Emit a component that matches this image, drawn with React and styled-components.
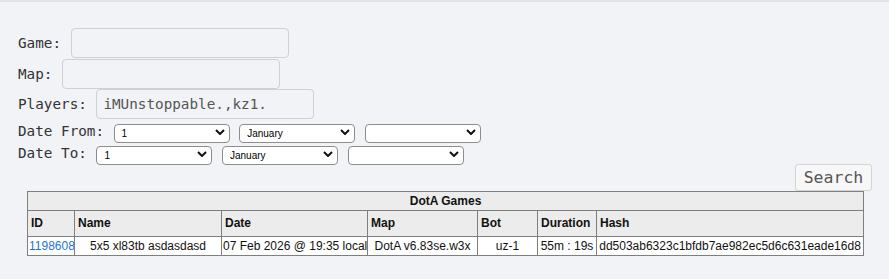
import React from 'react'
import styled, { createGlobalStyle } from 'styled-components'

const GlobalStyle = createGlobalStyle`
  html, body {
    margin: 0;
    padding: 0;
    background: #f2f3f7;
  }
  body {
    border-top: 2px solid #e2e3e7;
    font-family: "DejaVu Sans Mono", monospace;
  }
`

const Page = styled.div`
  padding: 26px 0 24px 0;
`

const Form = styled.form`
  padding-left: 18px;
  display: flex;
  flex-direction: column;
  gap: 0.5px;
`

const FieldRow = styled.div`
  display: flex;
  align-items: center;
  gap: 9.5px;
  height: ${(p) => p.$h || 30}px;
  margin-top: ${(p) => p.$mt || 0}px;
`

const Label = styled.label`
  font-family: "DejaVu Sans Mono", monospace;
  font-size: 14.3px;
  color: #333;
  white-space: pre;
`

const TextInput = styled.input`
  box-sizing: border-box;
  width: 218px;
  height: 30px;
  margin: 0;
  padding: 0 6px;
  background: transparent;
  border: 1px solid #cfd0d3;
  border-radius: 4px;
  font-family: "DejaVu Sans Mono", monospace;
  font-size: 14.3px;
  color: #555;
  outline: none;
`

const Selects = styled.div`
  display: flex;
  gap: 9.6px;
`

const SelectWrap = styled.div`
  position: relative;
  width: 116px;
  height: 19px;
  svg {
    position: absolute;
    right: 5px;
    top: 7px;
    pointer-events: none;
  }
`

const Select = styled.select`
  appearance: none;
  box-sizing: border-box;
  width: 100%;
  height: 100%;
  margin: 0;
  padding: 0 0 0 7px;
  background: #fff;
  border: 1px solid #8d8d8d;
  border-radius: 4px;
  font-family: "Liberation Sans", Arial, sans-serif;
  font-size: 10px;
  color: #000;
`

const SearchRow = styled.div`
  display: flex;
  justify-content: flex-end;
  padding-right: 17px;
`

const SearchButton = styled.button`
  box-sizing: border-box;
  width: 77px;
  height: 27px;
  padding: 0;
  background: #f7f7f8;
  border: 1px solid #d3d4d7;
  border-radius: 3px;
  font-family: "DejaVu Sans Mono", monospace;
  font-size: 16.5px;
  color: #555;
  cursor: pointer;
`

const Table = styled.table`
  margin-left: 27px;
  width: 837px;
  table-layout: fixed;
  border-collapse: collapse;
  border: 1px solid #7f7f7f;
  font-family: "Liberation Sans", Arial, sans-serif;
  font-size: 12px;
  color: #111;
`

const TitleCell = styled.th`
  background: #ececec;
  border: 1px solid #7f7f7f;
  padding: 2px 3px;
  line-height: 14px;
  font-weight: bold;
  text-align: center;
`

const HeadCell = styled.th`
  background: #ececec;
  border: 1px solid #7f7f7f;
  padding: 5px 3px 6px;
  line-height: 14px;
  font-weight: bold;
  text-align: left;
  white-space: nowrap;
`

const Cell = styled.td`
  background: #fff;
  border: 1px solid #7f7f7f;
  padding: 2px 1px;
  line-height: 14px;
  text-align: center;
  white-space: nowrap;
  overflow: hidden;
`

const IdLink = styled.a`
  color: #1b76d3;
  text-decoration: none;
`

const Chevron = () => (
  <svg width="10" height="6" viewBox="0 0 10 6">
    <polyline points="1,1 5,5 9,1" fill="none" stroke="#111" strokeWidth="2" />
  </svg>
)

const DateSelect = ({ value, options }) => (
  <SelectWrap>
    <Select defaultValue={value}>
      {options.map((o) => (
        <option key={o} value={o}>{o}</option>
      ))}
    </Select>
    <Chevron />
  </SelectWrap>
)

const days = Array.from({ length: 31 }, (_, i) => String(i + 1))
const months = ['January', 'February', 'March', 'April', 'May', 'June', 'July',
  'August', 'September', 'October', 'November', 'December']
const years = ['']

const DateRow = ({ label, mt }) => (
  <FieldRow $h={21.5} $mt={mt}>
    <Label>{label}</Label>
    <Selects>
      <DateSelect value="1" options={days} />
      <DateSelect value="January" options={months} />
      <DateSelect value="" options={years} />
    </Selects>
  </FieldRow>
)

const columns = [
  { name: 'ID', width: 47 },
  { name: 'Name', width: 147 },
  { name: 'Date', width: 146 },
  { name: 'Map', width: 110 },
  { name: 'Bot', width: 60 },
  { name: 'Duration', width: 59 },
  { name: 'Hash', width: 267 },
]

const games = [
  {
    id: '1198608',
    name: '5x5 xl83tb asdasdasd',
    date: '07 Feb 2026 @ 19:35 local',
    map: 'DotA v6.83se.w3x',
    bot: 'uz-1',
    duration: '55m : 19s',
    hash: 'dd503ab6323c1bfdb7ae982ec5d6c631eade16d8',
  },
]

const App = () => {
  return (
    <Page>
      <GlobalStyle />
      <Form onSubmit={(e) => e.preventDefault()}>
        <FieldRow>
          <Label>Game:</Label>
          <TextInput type="text" name="game" />
        </FieldRow>
        <FieldRow>
          <Label>Map:</Label>
          <TextInput type="text" name="map" />
        </FieldRow>
        <FieldRow>
          <Label>Players:</Label>
          <TextInput type="text" name="players" defaultValue="iMUnstoppable.,kz1." />
        </FieldRow>
        <DateRow label="Date From:" mt={1} />
        <DateRow label="Date To:" />
      </Form>
      <SearchRow>
        <SearchButton type="button">Search</SearchButton>
      </SearchRow>
      <Table>
        <colgroup>
          {columns.map((c) => <col key={c.name} style={{ width: c.width }} />)}
        </colgroup>
        <thead>
          <tr>
            <TitleCell colSpan={columns.length}>DotA Games</TitleCell>
          </tr>
          <tr>
            {columns.map((c) => <HeadCell key={c.name}>{c.name}</HeadCell>)}
          </tr>
        </thead>
        <tbody>
          {games.map((g) => (
            <tr key={g.id}>
              <Cell><IdLink href="#">{g.id}</IdLink></Cell>
              <Cell>{g.name}</Cell>
              <Cell>{g.date}</Cell>
              <Cell>{g.map}</Cell>
              <Cell>{g.bot}</Cell>
              <Cell>{g.duration}</Cell>
              <Cell>{g.hash}</Cell>
            </tr>
          ))}
        </tbody>
      </Table>
    </Page>
  )
}

export default App
